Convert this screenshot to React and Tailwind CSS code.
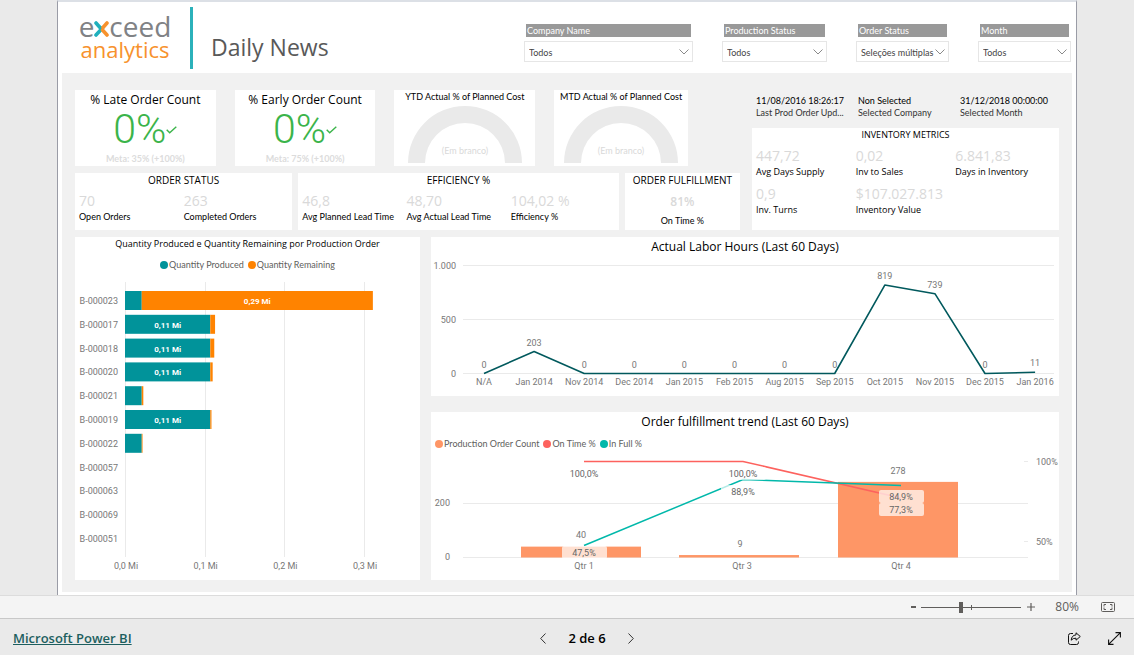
import React from "react";

const slicers = [
  { id: "company", label: "Company Name", value: "Todos", width: "w-[169px]" },
  { id: "production", label: "Production Status", value: "Todos", width: "w-[105px]" },
  { id: "order", label: "Order Status", value: "Seleções múltiplas", width: "w-[93px]" },
  { id: "month", label: "Month", value: "Todos", width: "w-[93px]" },
];

function Slicer({ id, label, value, width }) {
  return (
    <div className={`${width} min-w-0`}>
      <label
        htmlFor={id}
        className="mx-0.5 block h-[13px] truncate bg-[#999] pl-px font-[Lato] text-[9px] leading-[14px] text-white"
      >
        {label}
      </label>
      <div className="relative mt-1 h-[21px] border border-[#e6e6e6]">
        <select
          id={id}
          defaultValue={value}
          className="block h-[19px] w-full appearance-none bg-white pt-0.5 pl-1 font-[Lato] text-[9px] leading-[17px] text-[#444] outline-none"
        >
          <option>{value}</option>
        </select>
        <svg
          viewBox="0 0 10 6"
          className="pointer-events-none absolute top-[7px] right-[3px] h-1.5 w-2.5"
          fill="none"
          stroke="#8a8a8a"
        >
          <path d="M.5 .5 5 5 9.5 .5" />
        </svg>
      </div>
    </div>
  );
}

function Logo() {
  return (
    <div className="flex w-[94px] flex-col items-center" aria-label="exceed analytics">
      <div className="flex items-baseline text-[28px] leading-7 text-[#808285]">
        <span>e</span>
        <svg viewBox="0 0 15 16" className="h-4 w-[15px]" fill="none" strokeWidth="3.6" strokeLinecap="round">
          <path d="M2 2 6 6.500M8.500 7 2 14" stroke="#1fb0bd" />
          <path d="M13 2 9 6.500M8.500 9 13 14" stroke="#f7922d" />
        </svg>
        <span>ceed</span>
      </div>
      <div className="text-[22px] leading-[18px] text-[#f7922d]">analytics</div>
    </div>
  );
}

function Kpi({ title, goal }) {
  return (
    <section className="bg-white text-center">
      <h2 className="pt-0.5 text-[12px] leading-4">{title}</h2>
      <div className="flex h-[43px] items-center justify-center text-[#3bb44a]">
        <span className="font-[Roboto] text-[41px] leading-[43px] font-light">0%</span>
        <svg viewBox="0 0 11 8" className="h-2 w-[11px]" fill="none" stroke="currentColor" strokeWidth="1.4">
          <path d="M.7 3.700 3.700 6.800 10.300 .8" />
        </svg>
      </div>
      <p className="font-[Lato] text-[9px] leading-[15px] font-bold text-[#dcdcdc]">{goal}</p>
    </section>
  );
}

function Gauge({ title }) {
  return (
    <section className="bg-white text-center">
      <h2 className="font-[Lato] text-[9px] leading-[14px]">{title}</h2>
      <svg viewBox="0 0 114 57" className="mx-auto mt-0.5 w-[114px]">
        <path d="M0 57A57 57 0 0 1 114 57H97A40 40 0 0 0 17 57Z" fill="#eaeaea" />
        <text x="57" y="48" textAnchor="middle" className="font-[Lato]" fontSize="9" fill="#d9d9d9">
          (Em branco)
        </text>
      </svg>
    </section>
  );
}

function Metric({ value, label, compact = false }) {
  return (
    <div className="min-w-0 whitespace-nowrap">
      <div className="text-[14px] leading-[18px] text-[#d9d9d9]">{value}</div>
      <div className={`text-[9px] leading-[14px] ${compact ? "font-[Lato]" : ""}`}>{label}</div>
    </div>
  );
}

function Legend({ items, className }) {
  return (
    <ul className={`flex gap-1 font-[Lato] text-[9px] leading-3 text-[#605e5c] ${className}`}>
      {items.map(([color, name]) => (
        <li key={name} className="flex items-center gap-px whitespace-nowrap">
          <svg viewBox="0 0 8 8" className="size-2">
            <circle cx="4" cy="4" r="4" fill={color} />
          </svg>
          {name}
        </li>
      ))}
    </ul>
  );
}

const orders = [
  ["B-000023", 0.021, 0.29, "0,29 Mi"],
  ["B-000017", 0.107, 0.006, "0,11 Mi"],
  ["B-000018", 0.107, 0.005, "0,11 Mi"],
  ["B-000020", 0.107, 0.003, "0,11 Mi"],
  ["B-000021", 0.021, 0.002, ""],
  ["B-000019", 0.107, 0.0015, "0,11 Mi"],
  ["B-000022", 0.021, 0.001, ""],
  ["B-000057", 0, 0, ""],
  ["B-000063", 0, 0, ""],
  ["B-000069", 0, 0, ""],
  ["B-000051", 0, 0, ""],
];

function OrdersChart() {
  const k = 797;
  return (
    <svg viewBox="0 0 345 303" className="block w-full font-[Roboto]" fontSize="9" fill="#777">
      {["0,0 Mi", "0,1 Mi", "0,2 Mi", "0,3 Mi"].map((t, i) => (
        <g key={t}>
          <path d={`M${Math.round(50 + i * 79.7) + 0.5} 5V280`} stroke="#eaeaea" />
          <text x={51 + i * 79.7} y="292" textAnchor="middle">
            {t}
          </text>
        </g>
      ))}
      {orders.map(([name, made, left, text], i) => {
        const y = 14 + i * 23.8;
        const main = left > made ? left : made;
        const start = left > made ? 50 + made * k : 50;
        return (
          <g key={name}>
            <text x="43" y={y + 13} textAnchor="end">
              {name}
            </text>
            <rect x="50" y={y} width={made * k} height="19" fill="#01939a" />
            <rect x={50 + made * k} y={y} width={left * k} height="19" fill="#ff8300" />
            <text x={start + (main * k) / 2} y={y + 13} textAnchor="middle" fill="#fff" fontWeight="700" fontSize="8">
              {text}
            </text>
          </g>
        );
      })}
    </svg>
  );
}

const hours = [
  ["N/A", 0],
  ["Jan 2014", 203],
  ["Nov 2014", 0],
  ["Dec 2014", 0],
  ["Jan 2015", 0],
  ["Feb 2015", 0],
  ["Aug 2015", 0],
  ["Sep 2015", 0],
  ["Oct 2015", 819],
  ["Nov 2015", 739],
  ["Dec 2015", 0],
  ["Jan 2016", 11],
];

function HoursChart() {
  const x = (i) => 53 + i * 50.1;
  const y = (v) => 116.5 - v * 0.108;
  return (
    <svg viewBox="0 0 628 139" className="block w-full font-[Roboto]" fontSize="9" fill="#777">
      {[
        ["1.000", 8.5],
        ["500", 62.5],
        ["0", 116.5],
      ].map(([t, gy]) => (
        <g key={t}>
          <path d={`M32 ${gy}H623`} stroke="#eaeaea" />
          <text x="25" y={gy + 3} textAnchor="end">
            {t}
          </text>
        </g>
      ))}
      <polyline
        points={hours.map(([, v], i) => `${x(i)},${y(v)}`).join(" ")}
        fill="none"
        stroke="#01595d"
        strokeWidth="1.6"
        strokeLinejoin="round"
      />
      {hours.map(([name, v], i) => (
        <g key={name} textAnchor="middle">
          <text x={x(i)} y={y(v) - 6}>
            {v}
          </text>
          <text x={x(i)} y="128">
            {name}
          </text>
        </g>
      ))}
    </svg>
  );
}

function TrendChart() {
  const bars = [
    ["Qtr 1", 40, 90],
    ["Qtr 3", 9, 248],
    ["Qtr 4", 278, 407],
  ];
  const tags = [
    [153, 22, "100,0%"],
    [312, 22, "100,0%"],
    [312, 40, "88,9%"],
    [153, 101, "47,5%"],
    [470, 45, "84,9%"],
    [470, 58, "77,3%"],
  ];
  return (
    <svg viewBox="0 0 628 128" className="block w-full font-[Roboto]" fontSize="9" fill="#777">
      <path d="M32 105.500H597M32 51.500H597M593 9.500H597M593 89.500H597" stroke="#eaeaea" />
      <text x="19" y="108" textAnchor="end">
        0
      </text>
      <text x="19" y="54" textAnchor="end">
        200
      </text>
      <text x="605" y="13">
        100%
      </text>
      <text x="605" y="93">
        50%
      </text>
      {bars.map(([name, v, bx]) => (
        <g key={name}>
          <rect x={bx} y={105.5 - v * 0.272} width="120" height={v * 0.272} fill="#fe9666" />
          <text x={bx + 63} y="117" textAnchor="middle">
            {name}
          </text>
        </g>
      ))}
      <path d="M153 9.500H312L470 46" fill="none" stroke="#fd625e" strokeWidth="1.5" />
      <path d="M153 93.500 312 27.500 470 33.500" fill="none" stroke="#01b8aa" strokeWidth="1.500" />
      {tags.map(([tx, ty, t], i) => (
        <g key={i}>
          <rect x={tx - 22} y={ty - 7} width="45" height="13" rx="2" fill="#fff" fillOpacity=".7" />
          <text x={tx} y={ty + 3} textAnchor="middle" fill="#666">
            {t}
          </text>
        </g>
      ))}
      <g textAnchor="middle">
        <text x="150" y="86">
          40
        </text>
        <text x="309" y="95">
          9
        </text>
        <text x="467" y="22">
          278
        </text>
      </g>
    </svg>
  );
}

function Report() {
  return (
    <main className="mx-[57px] grow border-x border-t-2 border-x-[#9a9ca6] border-t-[#dce0e6] bg-white px-1">
      <header className="flex h-[71px] items-start justify-between gap-6 pt-[5px]">
        <div className="flex items-start pl-4">
          <div className="pt-[5px]">
            <Logo />
          </div>
          <div className="ml-[18px] h-[62px] w-[3px] bg-[#2bb1ba]" />
          <h1 className="ml-[18px] pt-6 text-[23px] leading-8 whitespace-nowrap text-[#595959]">Daily News</h1>
        </div>
        <div className="flex min-w-0 gap-[29px] pt-[17px] pr-px">
          {slicers.map((s) => (
            <Slicer key={s.id} {...s} />
          ))}
        </div>
      </header>

      <div className="bg-[#f1f1f1] px-[13px] pt-[17px] pb-3">
        <div className="grid grid-cols-[665fr_307fr] gap-3">
          <div className="flex flex-col gap-[7px]">
            <div className="grid grid-cols-[141fr_141fr_141fr_134fr] gap-[19px] pr-[52px]">
              <Kpi title="% Late Order Count" goal="Meta: 35% (+100%)" />
              <Kpi title="% Early Order Count" goal="Meta: 75% (+100%)" />
              <Gauge title="YTD Actual % of Planned Cost" />
              <Gauge title="MTD Actual % of Planned Cost" />
            </div>
            <div className="grid grid-cols-[217fr_320fr_115fr] gap-1.5">
              <section className="bg-white px-1 pb-1.5">
                <h2 className="text-center text-[10px] leading-[14px]">ORDER STATUS</h2>
                <div className="mt-[5px] grid grid-cols-2">
                  <Metric compact value="70" label="Open Orders" />
                  <Metric compact value="263" label="Completed Orders" />
                </div>
              </section>
              <section className="bg-white px-1 pb-1.5">
                <h2 className="text-center text-[10px] leading-[14px]">EFFICIENCY %</h2>
                <div className="mt-[5px] grid grid-cols-3">
                  <Metric compact value="46,8" label="Avg Planned Lead Time" />
                  <Metric compact value="48,70" label="Avg Actual Lead Time" />
                  <Metric compact value="104,02 %" label="Efficiency %" />
                </div>
              </section>
              <section className="bg-white text-center">
                <h2 className="text-[10px] leading-[14px] whitespace-nowrap">ORDER FULFILLMENT</h2>
                <div className="mt-[7px] text-[12px] leading-4 font-semibold text-[#d9d9d9]">81%</div>
                <div className="mt-1 font-[Lato] text-[9px] leading-[14px]">On Time %</div>
              </section>
            </div>
          </div>

          <div className="flex flex-col">
            <div className="grid grid-cols-[102fr_102fr_99fr] pt-[5px] pb-[9px] pl-1 font-[Lato] text-[9px] leading-3">
              {[
                ["11/08/2016 18:26:17", "Last Prod Order Upd..."],
                ["Non Selected", "Selected Company"],
                ["31/12/2018 00:00:00", "Selected Month"],
              ].map(([v, l]) => (
                <div key={l} className="min-w-0 whitespace-nowrap">
                  <div>{v}</div>
                  <div className="text-[#333]">{l}</div>
                </div>
              ))}
            </div>
            <section className="grow bg-white px-1">
              <h2 className="text-center text-[9px] leading-[14px]">INVENTORY METRICS</h2>
              <div className="mt-[5px] grid grid-cols-3 gap-y-1.5">
                <Metric value="447,72" label="Avg Days Supply" />
                <Metric value="0,02" label="Inv to Sales" />
                <Metric value="6.841,83" label="Days in Inventory" />
                <Metric value="0,9" label="Inv. Turns" />
                <Metric value="$107.027.813" label="Inventory Value" />
              </div>
            </section>
          </div>
        </div>

        <div className="mt-[7px] grid grid-cols-[345fr_628fr] items-start gap-[11px]">
          <section className="bg-white">
            <h2 className="text-center text-[9px] leading-[14px]">
              Quantity Produced e Quantity Remaining por Production Order
            </h2>
            <Legend
              className="mt-2 mb-1.5 justify-center"
              items={[
                ["#01939a", "Quantity Produced"],
                ["#ff8300", "Quantity Remaining"],
              ]}
            />
            <OrdersChart />
          </section>
          <div className="flex flex-col gap-4">
            <section className="bg-white">
              <h2 className="text-center text-[12px] leading-5">Actual Labor Hours (Last 60 Days)</h2>
              <HoursChart />
            </section>
            <section className="bg-white">
              <h2 className="text-center text-[12px] leading-5">Order fulfillment trend (Last 60 Days)</h2>
              <Legend
                className="mt-1.5 mb-0.5 pl-1"
                items={[
                  ["#fe9666", "Production Order Count"],
                  ["#fd625e", "On Time %"],
                  ["#01b8aa", "In Full %"],
                ]}
              />
              <TrendChart />
            </section>
          </div>
        </div>
      </div>
    </main>
  );
}

function ZoomBar() {
  return (
    <div className="flex h-6 shrink-0 items-center justify-end border-y border-t-[#dcdcdc] border-b-[#c8c8c8] bg-[#f4f4f4] pr-[19px] text-[#605e5c]">
      <button type="button" aria-label="Zoom out" className="flex h-4 w-[5px] items-center">
        <span className="h-0.5 w-full bg-[#605e5c]" />
      </button>
      <div className="relative mx-[5px] flex h-4 w-[100px] items-center">
        <span className="absolute top-1.5 left-1/2 h-[5px] w-px bg-[#605e5c]" />
        <input
          type="range"
          aria-label="Zoom"
          min="0"
          max="100"
          defaultValue="39"
          className="h-4 w-full appearance-none bg-transparent [&::-webkit-slider-runnable-track]:h-px [&::-webkit-slider-runnable-track]:bg-[#605e5c] [&::-webkit-slider-thumb]:-mt-[5px] [&::-webkit-slider-thumb]:h-[11px] [&::-webkit-slider-thumb]:w-1 [&::-webkit-slider-thumb]:appearance-none [&::-webkit-slider-thumb]:bg-[#605e5c]"
        />
      </div>
      <button type="button" aria-label="Zoom in" className="ml-px">
        <svg viewBox="0 0 8 8" className="size-2" stroke="currentColor" strokeWidth="1.2">
          <path d="M4 0V8M0 4H8" />
        </svg>
      </button>
      <span className="ml-5 text-[12px] leading-4">80%</span>
      <button type="button" aria-label="Fit to page" className="ml-[22px]">
        <svg viewBox="0 0 14 10" className="h-2.5 w-3.5" fill="none" stroke="currentColor">
          <rect x=".5" y=".5" width="13" height="9" rx="1" />
          <path d="M3 4.500V2.500H5M9 2.500H11V4.500M11 5.500V7.500H9M5 7.500H3V5.500" />
        </svg>
      </button>
    </div>
  );
}

function Footer() {
  return (
    <footer className="grid h-9 shrink-0 grid-cols-3 items-center bg-[#eaeaea] px-[13px] pt-0.5">
      <a href="#powerbi" className="text-[13px] leading-5 font-semibold text-[#1d5f5f] underline">
        Microsoft Power BI
      </a>
      <nav className="flex items-center justify-center gap-[22px] pl-10">
        <button type="button" aria-label="Previous page">
          <svg viewBox="0 0 6 11" className="h-[11px] w-1.5" fill="none" stroke="#333">
            <path d="M5.500 .5 .7 5.500 5.500 10.500" />
          </svg>
        </button>
        <span className="text-[13px] leading-5 font-semibold">2 de 6</span>
        <button type="button" aria-label="Next page">
          <svg viewBox="0 0 6 11" className="h-[11px] w-1.5" fill="none" stroke="#333">
            <path d="M.5 .5 5.300 5.500 .5 10.500" />
          </svg>
        </button>
      </nav>
      <div className="flex items-center justify-end gap-[27px]">
        <button type="button" aria-label="Share">
          <svg viewBox="0 0 13 13" className="size-[13px]" fill="none" stroke="#111" strokeLinejoin="round">
            <path d="M5 1.500H2.500A2 2 0 0 0 .5 3.500V10.500A2 2 0 0 0 2.500 12.500H8.500A2 2 0 0 0 10.500 10.500V9.500" />
            <path d="M8 .8 12.300 4.500 8 8.200V6.200Q5 6 3.200 8.200 3.600 3.300 8 2.900Z" />
          </svg>
        </button>
        <button type="button" aria-label="Full screen">
          <svg viewBox="0 0 13 13" className="size-[13px]" fill="none" stroke="#111" strokeWidth="1.1">
            <path d="M.8 12.200 12.200 .8M7.500 .6H12.400V5.500M.6 7.500V12.400H5.500" />
          </svg>
        </button>
      </div>
    </footer>
  );
}

export default function App() {
  return (
    <div className="flex min-h-screen flex-col bg-[#eaeaea] font-['Open_Sans','Noto_Sans',sans-serif] text-black">
      <Report />
      <ZoomBar />
      <Footer />
    </div>
  );
}
